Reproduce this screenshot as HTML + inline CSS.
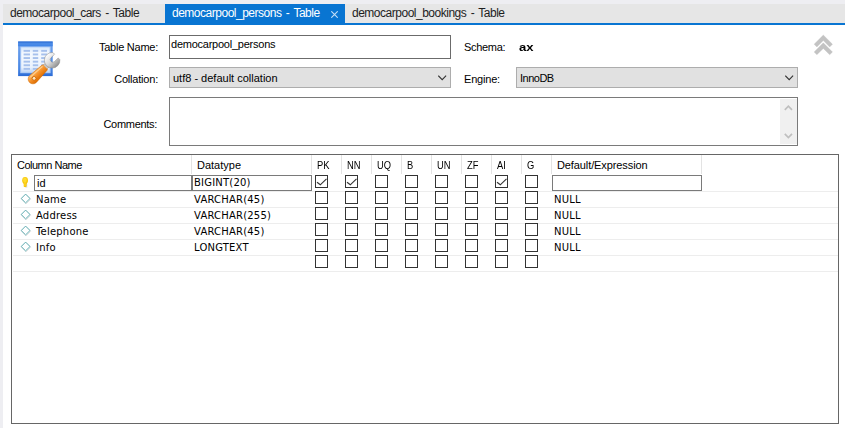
<!DOCTYPE html>
<html><head><meta charset="utf-8"><title>democarpool_persons - Table</title>
<style>
html,body{margin:0;padding:0;}
body{width:845px;height:428px;position:relative;overflow:hidden;background:#fff;font-family:"Liberation Sans",sans-serif;font-size:11px;color:#000;}
div,span{position:absolute;box-sizing:border-box;white-space:nowrap;}
svg{position:absolute;}
.tabbar{left:0;top:0;width:845px;height:23px;background:#e6e6e6;}
.tabtop{left:0;top:0;width:845px;height:4px;background:#eeeef2;}
.tabline{left:3px;top:23px;width:842px;height:2px;background:#0975d2;}
.leftstrip{left:0;top:0;width:3px;height:428px;background:#eeeef2;}
.tab{top:4px;height:19px;font-size:12px;line-height:18px;color:#1e1e1e;letter-spacing:-0.49px;word-spacing:1.5px;}
.tab.sel{background:#0975d2;color:#fff;}
.lbl{font-size:11px;line-height:14px;}
.lbl.r{left:60px;width:98px;text-align:right;}
.input{background:#fff;border:1px solid #7a7a7a;}
.select{background:#e1e1e1;border:1px solid #adadad;}
.gtxt{font-family:"DejaVu Sans","Liberation Sans",sans-serif;font-size:10px;line-height:16px;letter-spacing:0.2px;}
.htxt{font-size:11px;line-height:16px;top:157px;}
.hsep{top:155px;width:1px;height:19px;background:#e3e3e3;}
.rline{left:13px;width:825px;height:1px;background:#ededed;}
.cb{width:13px;height:13px;border:1px solid #333;background:#fff;}
</style></head><body>
<div class="tabbar"></div><div class="tabtop"></div>
<div class="leftstrip"></div>
<div class="tabline"></div>
<div class="tab" style="left:3px;width:162px;"><span style="left:7px;top:0">democarpool_cars - Table</span></div>
<div class="tab sel" style="left:165px;width:180px;"><span style="left:7px;top:0">democarpool_persons - Table</span>
<svg style="left:166px;top:7px" width="7" height="7" viewBox="0 0 7 7"><path d="M0.300 0.300 L6.700 6.700 M6.700 0.300 L0.300 6.700" stroke="#c4def6" stroke-width="1.100" fill="none"/></svg></div>
<div class="tab" style="left:345px;width:200px;"><span style="left:7px;top:0">democarpool_bookings - Table</span></div>
<svg style="left:12px;top:36px" width="56" height="52" viewBox="0 0 56 52">
<defs>
<linearGradient id="gh" x1="0" y1="0" x2="0" y2="1"><stop offset="0" stop-color="#2868cf"/><stop offset="0.45" stop-color="#4c8ce8"/><stop offset="1" stop-color="#3f83e6"/></linearGradient>
<linearGradient id="gf" x1="0" y1="0" x2="0" y2="1"><stop offset="0" stop-color="#74a6ee"/><stop offset="0.8" stop-color="#4886e4"/><stop offset="1" stop-color="#2c6cd6"/></linearGradient>
<linearGradient id="gb" x1="0" y1="0" x2="0" y2="1"><stop offset="0" stop-color="#d9e8fb"/><stop offset="0.25" stop-color="#f4f9ff"/><stop offset="0.8" stop-color="#eaf2fd"/><stop offset="1" stop-color="#bcd5f7"/></linearGradient>
<linearGradient id="go" x1="0" y1="0" x2="0" y2="1"><stop offset="0" stop-color="#ffc070"/><stop offset="0.45" stop-color="#f6922a"/><stop offset="1" stop-color="#dd6c00"/></linearGradient>
<linearGradient id="gs" x1="0" y1="0" x2="0" y2="1"><stop offset="0" stop-color="#ffffff"/><stop offset="0.5" stop-color="#d8d8d8"/><stop offset="1" stop-color="#8e8e8e"/></linearGradient>
<filter id="bl" x="-10%" y="-10%" width="120%" height="120%"><feGaussianBlur stdDeviation="0.35"/></filter>
</defs>
<g filter="url(#bl)">
<rect x="6.100" y="5.500" width="34.600" height="34.600" fill="url(#gf)"/>
<rect x="6.100" y="5.500" width="34.600" height="4.800" fill="url(#gh)"/>
<rect x="8.200" y="10.600" width="30.400" height="26.600" fill="#a9c8f5"/>
<rect x="9.200" y="11.400" width="28.400" height="24.800" fill="url(#gb)"/>
<g fill="#a6c0ec">
<rect x="11.600" y="13.900" width="6.400" height="1.900"/><rect x="20.800" y="13.900" width="5.400" height="1.900"/><rect x="29.200" y="13.900" width="5.800" height="1.900"/>
<rect x="11.600" y="17.500" width="6.400" height="1.900"/><rect x="20.800" y="17.500" width="5.400" height="1.900"/><rect x="29.200" y="17.500" width="5.800" height="1.900"/>
<rect x="11.600" y="21.100" width="6.400" height="1.900"/><rect x="20.800" y="21.100" width="5.400" height="1.900"/><rect x="29.200" y="21.100" width="5.800" height="1.900"/>
<rect x="11.600" y="24.700" width="6.400" height="1.900"/><rect x="20.800" y="24.700" width="5.400" height="1.900"/><rect x="29.200" y="24.700" width="5.800" height="1.900"/>
<rect x="11.600" y="28.300" width="6.400" height="1.900"/><rect x="20.800" y="28.300" width="5.400" height="1.900"/><rect x="29.200" y="28.300" width="5.800" height="1.900"/>
<rect x="11.600" y="31.900" width="6.400" height="1.900"/><rect x="20.800" y="31.900" width="5.400" height="1.900"/><rect x="29.200" y="31.900" width="5.800" height="1.900"/>
</g>
<g transform="translate(40.100,24.300) rotate(-44.400)">
<path d="M-5,-2.300 L-9,-2.600 L-10.500,-3.600 L-26.800,-4.800 A4.800 4.800 0 0 0 -26.800,4.800 L-10.500,3.600 L-9,2.600 L-5,2.300 Z" fill="url(#go)" stroke="#d06800" stroke-width="0.500"/><path d="M-5,-2.300 L-9.500,-2.700 L-9.500,2.700 L-5,2.300 Z" fill="#c4c4c4"/>
<path d="M-27,-3.100 L-11.500,-2.300" stroke="#ffd9a0" stroke-width="1" stroke-linecap="round" fill="none" opacity="0.800"/>
<circle cx="-25.500" cy="0.300" r="1.900" fill="#ffe6c0" stroke="#c86200" stroke-width="0.800"/>
<path d="M6,-5 A7.800 7.800 0 1 0 6,5 L6,2.600 L1,2.600 A2.600 2.600 0 0 1 1,-2.600 L6,-2.600 Z" fill="url(#gs)" stroke="#8a8a8a" stroke-width="0.500"/>
</g>
</g>
</svg>

<div class="lbl r" style="top:40px;letter-spacing:-0.25px;">Table Name:</div>
<div class="input" style="left:169px;top:35px;width:282px;height:24px;border-color:#6b6b6b;"><span style="left:1px;top:2px;line-height:13px;font-size:11px;letter-spacing:-0.24px;">democarpool_persons</span></div>
<div class="lbl" style="left:464px;top:40px;letter-spacing:-0.3px;">Schema:</div>
<div class="lbl" style="left:519px;top:40px;font-weight:bold;transform:scaleX(1.19);transform-origin:0 0;">ax</div>
<div class="lbl r" style="top:72px;letter-spacing:-0.2px;">Collation:</div>
<div class="select" style="left:169px;top:67px;width:282px;height:21px;"><span style="left:3px;top:3px;line-height:14px;">utf8 - default collation</span>
<svg style="left:268px;top:7px" width="9" height="6" viewBox="0 0 9 6"><path d="M0.300 0.700 L4.200 4.600 L8.100 0.700" stroke="#333" stroke-width="1.100" fill="none"/></svg></div>
<div class="lbl" style="left:464px;top:72px;letter-spacing:-0.2px;">Engine:</div>
<div class="select" style="left:516px;top:67px;width:282px;height:21px;"><span style="left:3px;top:3px;line-height:14px;letter-spacing:-0.5px;">InnoDB</span>
<svg style="left:268px;top:7px" width="9" height="6" viewBox="0 0 9 6"><path d="M0.300 0.700 L4.200 4.600 L8.100 0.700" stroke="#333" stroke-width="1.100" fill="none"/></svg></div>
<div class="lbl r" style="top:117px;letter-spacing:-0.3px;padding-right:1px;">Comments:</div>
<div class="input" style="left:169px;top:97px;width:629px;height:49px;border-color:#7a7a7a;">
<div style="left:610px;top:1px;width:17px;height:45px;background:#f0f0f0;"></div>
<svg style="left:614px;top:7px" width="9" height="6" viewBox="0 0 9 6"><path d="M0.800 4.800 L4.400 1.200 L8 4.800" stroke="#bfbfbf" stroke-width="1.700" fill="none"/></svg>
<svg style="left:614px;top:35px" width="9" height="6" viewBox="0 0 9 6"><path d="M0.800 0.900 L4.400 4.500 L8 0.900" stroke="#bfbfbf" stroke-width="1.700" fill="none"/></svg>
</div>
<svg style="left:805px;top:28px" width="36" height="34" viewBox="0 0 36 34"><g fill="#c3c3c3" stroke="#c3c3c3" stroke-width="0.300" stroke-linejoin="round"><path d="M18.300 7 L9.100 16.200 L11.900 19 L18.300 12.600 L24.700 19 L27.500 16.200 Z"/><path d="M18.300 14.800 L9.100 24 L11.900 26.800 L18.300 20.400 L24.700 26.800 L27.500 24 Z"/></g></svg>
<div style="left:11px;top:154px;width:828px;height:270px;border:1px solid #666;background:#fff;"></div>
<div class="htxt" style="left:17px;letter-spacing:-0.5px;">Column Name</div>
<div class="htxt" style="left:197px;">Datatype</div>
<div class="htxt" style="left:317px;transform:scaleX(0.85);transform-origin:0 0;">PK</div>
<div class="htxt" style="left:347px;transform:scaleX(0.85);transform-origin:0 0;">NN</div>
<div class="htxt" style="left:377px;transform:scaleX(0.85);transform-origin:0 0;">UQ</div>
<div class="htxt" style="left:407px;transform:scaleX(0.85);transform-origin:0 0;">B</div>
<div class="htxt" style="left:437px;transform:scaleX(0.85);transform-origin:0 0;">UN</div>
<div class="htxt" style="left:467px;transform:scaleX(0.85);transform-origin:0 0;">ZF</div>
<div class="htxt" style="left:497px;transform:scaleX(0.85);transform-origin:0 0;">AI</div>
<div class="htxt" style="left:527px;transform:scaleX(0.85);transform-origin:0 0;">G</div>
<div class="htxt" style="left:557px;letter-spacing:-0.1px;">Default/Expression</div>
<div class="hsep" style="left:191px;"></div>
<div class="hsep" style="left:311px;"></div>
<div class="hsep" style="left:341px;"></div>
<div class="hsep" style="left:371px;"></div>
<div class="hsep" style="left:401px;"></div>
<div class="hsep" style="left:431px;"></div>
<div class="hsep" style="left:461px;"></div>
<div class="hsep" style="left:491px;"></div>
<div class="hsep" style="left:521px;"></div>
<div class="hsep" style="left:551px;"></div>
<div class="hsep" style="left:701px;"></div>
<div class="rline" style="top:191px;"></div>
<svg style="left:21px;top:176px" width="9" height="13" viewBox="0 0 9 13"><path d="M4.500 11.700 L6.300 11.700 L6.300 7.700 L3.300 7.700 L3.300 10.700 Z" fill="#d9d9d9" opacity="0.700"/><ellipse cx="4.100" cy="4.400" rx="2.900" ry="3.400" fill="#f7c70c"/><rect x="2.700" y="6.500" width="2.900" height="4.600" rx="0.800" fill="#f2bd05"/><ellipse cx="3.900" cy="4" rx="1.900" ry="2.400" fill="#ffdc2e"/><rect x="3.300" y="6" width="1.400" height="4.400" fill="#ffd826"/></svg>
<div class="input" style="left:34px;top:175px;width:158px;height:16px;"><span style="left:2px;top:0;line-height:14px;font-size:11px;">id</span></div>
<div class="input" style="left:192px;top:175px;width:120px;height:16px;"><span class="gtxt" style="left:1px;top:0;line-height:14px;">BIGINT(20)</span></div>
<div class="input" style="left:552px;top:175px;width:150px;height:16px;"></div>
<div class="cb" style="left:315px;top:175px;"><svg style="left:0;top:0" width="11" height="11" viewBox="0 0 11 11"><path d="M1 6.200 L4.300 8.800 L10.500 2.800" stroke="#333" stroke-width="1.150" fill="none"/></svg></div>
<div class="cb" style="left:345px;top:175px;"><svg style="left:0;top:0" width="11" height="11" viewBox="0 0 11 11"><path d="M1 6.200 L4.300 8.800 L10.500 2.800" stroke="#333" stroke-width="1.150" fill="none"/></svg></div>
<div class="cb" style="left:375px;top:175px;"></div>
<div class="cb" style="left:405px;top:175px;"></div>
<div class="cb" style="left:435px;top:175px;"></div>
<div class="cb" style="left:465px;top:175px;"></div>
<div class="cb" style="left:495px;top:175px;"><svg style="left:0;top:0" width="11" height="11" viewBox="0 0 11 11"><path d="M1 6.200 L4.300 8.800 L10.500 2.800" stroke="#333" stroke-width="1.150" fill="none"/></svg></div>
<div class="cb" style="left:525px;top:175px;"></div>
<div class="rline" style="top:207px;"></div>
<svg style="left:20px;top:193px" width="12" height="12" viewBox="0 0 12 12"><path d="M6.200 1.800 L10.700 6.300 L6.200 10.800 L1.700 6.300 Z" fill="none" stroke="#dcdcdc" stroke-width="0.900"/><path d="M5.600 1.100 L10 5.500 L5.600 9.900 L1.200 5.500 Z" fill="#fff" stroke="#5dabb0" stroke-width="1"/></svg>
<div class="gtxt" style="left:36px;top:192px;">Name</div>
<div class="gtxt" style="left:194px;top:192px;">VARCHAR(45)</div>
<div class="gtxt" style="left:554px;top:192px;">NULL</div>
<div class="cb" style="left:315px;top:191px;"></div>
<div class="cb" style="left:345px;top:191px;"></div>
<div class="cb" style="left:375px;top:191px;"></div>
<div class="cb" style="left:405px;top:191px;"></div>
<div class="cb" style="left:435px;top:191px;"></div>
<div class="cb" style="left:465px;top:191px;"></div>
<div class="cb" style="left:495px;top:191px;"></div>
<div class="cb" style="left:525px;top:191px;"></div>
<div class="rline" style="top:223px;"></div>
<svg style="left:20px;top:209px" width="12" height="12" viewBox="0 0 12 12"><path d="M6.200 1.800 L10.700 6.300 L6.200 10.800 L1.700 6.300 Z" fill="none" stroke="#dcdcdc" stroke-width="0.900"/><path d="M5.600 1.100 L10 5.500 L5.600 9.900 L1.200 5.500 Z" fill="#fff" stroke="#5dabb0" stroke-width="1"/></svg>
<div class="gtxt" style="left:36px;top:208px;">Address</div>
<div class="gtxt" style="left:194px;top:208px;">VARCHAR(255)</div>
<div class="gtxt" style="left:554px;top:208px;">NULL</div>
<div class="cb" style="left:315px;top:207px;"></div>
<div class="cb" style="left:345px;top:207px;"></div>
<div class="cb" style="left:375px;top:207px;"></div>
<div class="cb" style="left:405px;top:207px;"></div>
<div class="cb" style="left:435px;top:207px;"></div>
<div class="cb" style="left:465px;top:207px;"></div>
<div class="cb" style="left:495px;top:207px;"></div>
<div class="cb" style="left:525px;top:207px;"></div>
<div class="rline" style="top:239px;"></div>
<svg style="left:20px;top:225px" width="12" height="12" viewBox="0 0 12 12"><path d="M6.200 1.800 L10.700 6.300 L6.200 10.800 L1.700 6.300 Z" fill="none" stroke="#dcdcdc" stroke-width="0.900"/><path d="M5.600 1.100 L10 5.500 L5.600 9.900 L1.200 5.500 Z" fill="#fff" stroke="#5dabb0" stroke-width="1"/></svg>
<div class="gtxt" style="left:36px;top:224px;">Telephone</div>
<div class="gtxt" style="left:194px;top:224px;">VARCHAR(45)</div>
<div class="gtxt" style="left:554px;top:224px;">NULL</div>
<div class="cb" style="left:315px;top:223px;"></div>
<div class="cb" style="left:345px;top:223px;"></div>
<div class="cb" style="left:375px;top:223px;"></div>
<div class="cb" style="left:405px;top:223px;"></div>
<div class="cb" style="left:435px;top:223px;"></div>
<div class="cb" style="left:465px;top:223px;"></div>
<div class="cb" style="left:495px;top:223px;"></div>
<div class="cb" style="left:525px;top:223px;"></div>
<div class="rline" style="top:255px;"></div>
<svg style="left:20px;top:241px" width="12" height="12" viewBox="0 0 12 12"><path d="M6.200 1.800 L10.700 6.300 L6.200 10.800 L1.700 6.300 Z" fill="none" stroke="#dcdcdc" stroke-width="0.900"/><path d="M5.600 1.100 L10 5.500 L5.600 9.900 L1.200 5.500 Z" fill="#fff" stroke="#5dabb0" stroke-width="1"/></svg>
<div class="gtxt" style="left:36px;top:240px;">Info</div>
<div class="gtxt" style="left:194px;top:240px;">LONGTEXT</div>
<div class="gtxt" style="left:554px;top:240px;">NULL</div>
<div class="cb" style="left:315px;top:239px;"></div>
<div class="cb" style="left:345px;top:239px;"></div>
<div class="cb" style="left:375px;top:239px;"></div>
<div class="cb" style="left:405px;top:239px;"></div>
<div class="cb" style="left:435px;top:239px;"></div>
<div class="cb" style="left:465px;top:239px;"></div>
<div class="cb" style="left:495px;top:239px;"></div>
<div class="cb" style="left:525px;top:239px;"></div>
<div class="rline" style="top:271px;"></div>
<div class="cb" style="left:315px;top:255px;"></div>
<div class="cb" style="left:345px;top:255px;"></div>
<div class="cb" style="left:375px;top:255px;"></div>
<div class="cb" style="left:405px;top:255px;"></div>
<div class="cb" style="left:435px;top:255px;"></div>
<div class="cb" style="left:465px;top:255px;"></div>
<div class="cb" style="left:495px;top:255px;"></div>
<div class="cb" style="left:525px;top:255px;"></div>
</body></html>
